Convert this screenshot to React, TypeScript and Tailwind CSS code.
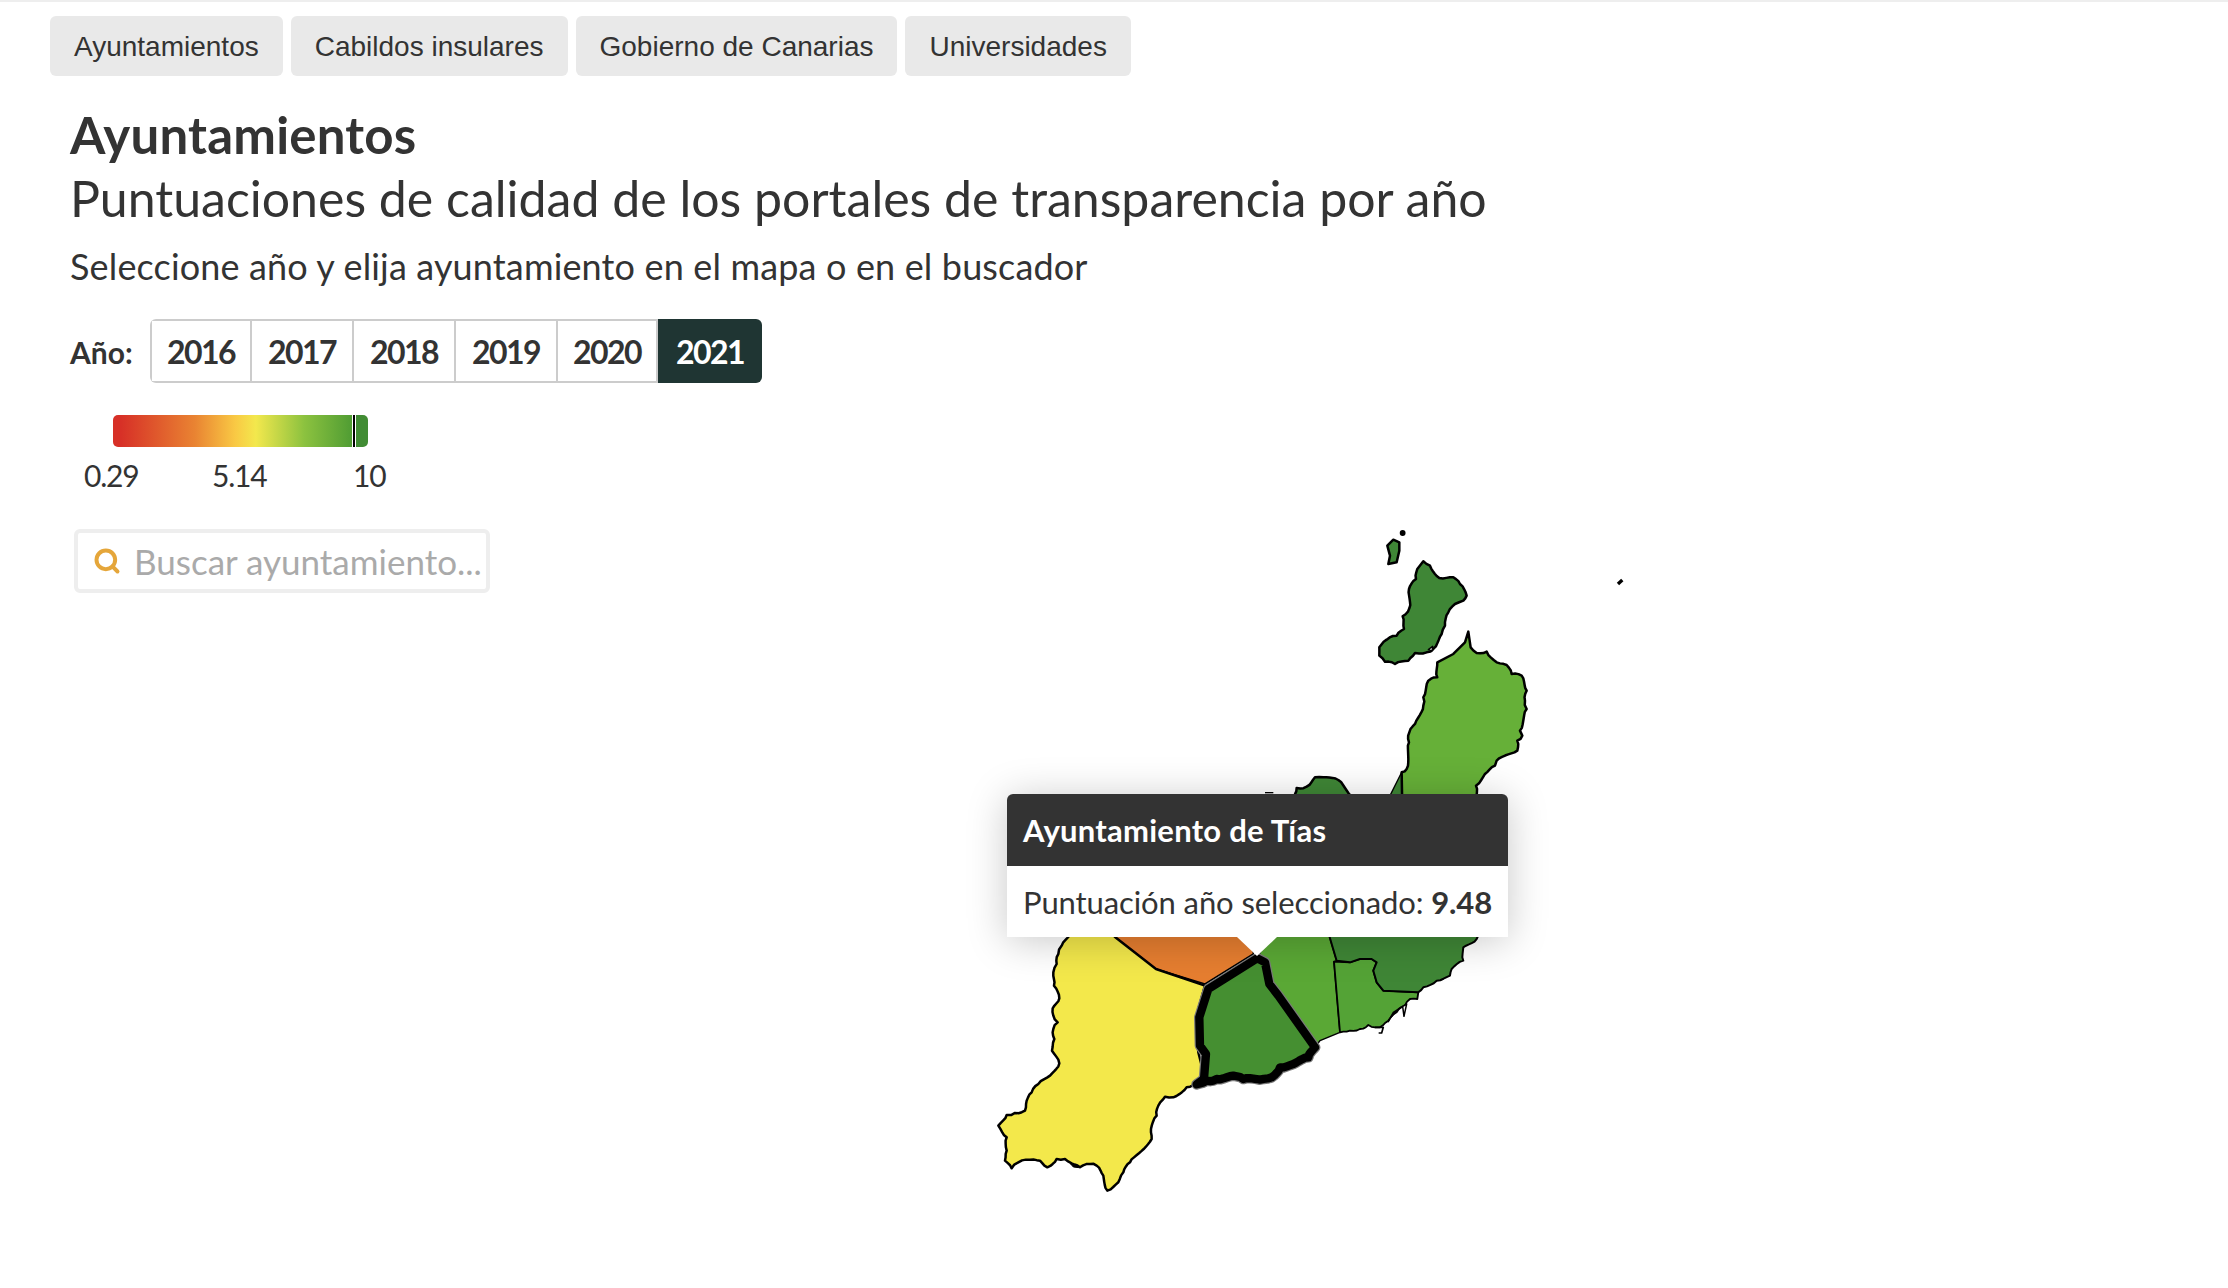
import { Search } from "lucide-react";

const sans = "font-['Lato','Noto_Sans',sans-serif]";

const tabs = ["Ayuntamientos", "Cabildos insulares", "Gobierno de Canarias", "Universidades"];
const years = [2016, 2017, 2018, 2019, 2020];

// "L" = tramo de costa (se le añade irregularidad), "T" = linde interior recto
function coast(d: string) {
  const parts = d.match(/[MLTZ]|-?\d+,-?\d+/g) ?? [];
  let out = "";
  let px = 0;
  let py = 0;
  let cmd = "M";
  let n = 0;
  for (const p of parts) {
    if (p === "Z") {
      out += "Z";
    } else if (p === "M" || p === "L" || p === "T") {
      cmd = p;
    } else {
      const [x, y] = p.split(",").map(Number);
      if (cmd === "L") {
        const len = Math.hypot(x - px, y - py);
        const steps = Math.floor(len / 9);
        for (let i = 1; i < steps; i++) {
          n++;
          const off = Math.sin(n * 12.9898) * 3.2;
          const t = i / steps;
          const ox = (-(y - py) / len) * off;
          const oy = ((x - px) / len) * off;
          out += `L${(px + (x - px) * t + ox).toFixed(1)},${(py + (y - py) * t + oy).toFixed(1)}`;
        }
      }
      out += `${cmd === "M" ? "M" : "L"}${x},${y}`;
      px = x;
      py = y;
    }
  }
  return out;
}

const yaiza = coast(
  "M235,-60 T235,24 L215,50 L205,75 L200,105 L190,130 L192,170 L208,208 L188,238 L190,260 L203,280 L190,300 L193,330 L186,365 L208,403 L180,440 L145,465 L125,490 L110,515 L105,545 L75,552 L50,558 L25,590 L50,625 L50,665 L45,695 L65,718 L85,700 L120,692 L150,695 L172,715 L200,690 L225,690 L245,703 L270,715 L300,705 L320,710 L340,740 L352,785 L385,760 L400,730 L420,700 L485,630 L483,600 L500,560 L505,530 L525,503 L550,505 L590,475 L620,465 T640,430 T625,370 T618,265 T645,170 T498,120 T375,24 T300,-60 Z"
);
const orange = "M300,-60 L375,24 L498,120 L645,165 L790,75 L790,-60 Z";

const tias = coast(
  "M232,88 T255,100 T268,165 T295,200 T405,355 L385,385 L340,405 L300,415 L275,445 L240,452 L190,450 L160,440 L110,450 L80,455 L50,466 T72,450 T78,375 T60,350 T58,265 T85,180 Z"
);
const tinajo = "M232,88 L290,-40 L430,-40 L470,95 L462,98 L480,310 L420,335 L405,355 L295,200 L268,165 L255,100 Z";
const arrecife = coast(
  "M462,98 T510,100 T540,90 T575,90 T590,100 T580,125 T590,160 T610,185 T715,190 T712,210 L690,210 L675,230 L650,250 L625,275 L600,295 L585,295 L565,288 L540,300 L510,305 L480,310 Z"
);
const teguiseSur = coast(
  "M430,-40 T470,95 T510,100 T540,90 T575,90 T590,100 T580,125 T590,160 T610,185 T715,190 L730,175 L770,155 L810,140 L815,120 L850,95 L850,55 L890,30 L900,-40 Z"
);

const graciosa = coast(
  "M430,157 L450,170 L478,207 L520,205 L540,225 L560,260 L550,275 L525,285 L505,310 L495,350 L485,375 L460,420 L440,430 L405,432 L385,455 L345,465 L315,458 L298,440 L298,415 L320,392 L350,380 L372,360 L368,322 L388,298 L387,240 L408,210 L412,180 Z"
);
const montana = "M340,92 L358,100 L358,125 L350,160 L325,165 L330,140 L322,110 Z";
const haria = coast(
  "M565,368 T572,415 L590,432 L620,428 L650,460 L680,468 L695,495 L725,500 L740,545 L735,575 L740,600 L720,665 L727,680 L712,695 L712,725 L650,755 L645,770 L615,795 L588,830 L588,900 T367,900 T365,790 L380,780 L387,700 L388,670 L405,645 L430,590 L430,565 L445,515 L472,505 L472,460 T520,435 T555,400 Z"
);
const wedge = "M365,790 L330,860 L367,860 Z";
const bump = coast("M160,100 L170,72 L200,68 L225,40 L250,40 L295,48 L340,100 Z");

// trazado de la isla, cada grupo en las coordenadas de su recorte
function MapaLanzarote() {
  return (
    <svg width="660" height="690" viewBox="980 520 660 690" className="block">
      <g transform="translate(1280 510) scale(0.3333)" stroke="#000" strokeWidth="7.5" strokeLinejoin="round">
        <path d={graciosa} fill="#3f8636" />
        <path d="M445,422 L458,412 L456,426 Z" fill="#fff" strokeWidth="4" />
        <path d={montana} fill="#3f8636" />
        <circle cx="368" cy="72" r="5" fill="#000" />
        <path d="M1014,225 L1027,213" strokeWidth="10" />
        <path d={wedge} fill="#3f8636" strokeWidth="4" />
        <path d={haria} fill="#66b038" />
      </g>
      <g transform="translate(1240 765) scale(0.3333)" stroke="#000" strokeWidth="7.5" strokeLinejoin="round">
        <path d={bump} fill="#3f8636" />
        <path d="M75,86 L100,86" strokeWidth="4" />
      </g>
      <g transform="translate(990 930) scale(0.3333)" stroke="#000" strokeLinejoin="round">
        <path d={orange} fill="#e67e30" strokeWidth="4.5" />
        <path d={yaiza} fill="#f3e84b" strokeWidth="7.5" />
        <path d="M242,705 L258,708 L266,716 L250,714 Z" fill="#000" strokeWidth="3" />
      </g>
      <g transform="translate(1180 930) scale(0.3333)" stroke="#000" strokeLinejoin="round">
        <path d={tinajo} fill="#5aa835" strokeWidth="4.5" />
        <path d={arrecife} fill="#54a336" strokeWidth="5.5" />
        <path d={teguiseSur} fill="#3f8636" strokeWidth="6" />
        <path d="M585,295 L610,295 L605,312 L596,312" fill="none" strokeWidth="5" />
        <path d="M625,278 L640,250 L668,232 L672,262 L680,225 L655,240 L630,268 Z" fill="#fff" strokeWidth="4.5" />
        <path d={tias} fill="#458f31" stroke="#7a7a7a" strokeWidth="32" />
        <path d={tias} fill="#458f31" strokeWidth="25" />
      </g>
    </svg>
  );
}

function Tooltip() {
  return (
    <div className={`absolute left-[27px] top-[275px] w-[501px] rounded-t-[6px] bg-white text-[#333] shadow-[0_4px_40px_rgba(0,0,0,0.22)] ${sans}`}>
      <div className="flex h-[72px] items-center rounded-t-[6px] bg-[#333] px-4 text-[31px] font-bold tracking-[0.25px] text-white">
        Ayuntamiento de Tías
      </div>
      <div className="flex h-[71px] items-center whitespace-nowrap px-4 pt-[2px] text-[31px] tracking-[-0.1px]">
        Puntuación año seleccionado:&nbsp;<b>9.48</b>
      </div>
      <div className="absolute left-[230px] top-[143px] h-0 w-0 border-x-[20px] border-t-[19px] border-x-transparent border-t-white" />
    </div>
  );
}

export default function App() {
  return (
    <div className="min-h-[1288px] w-[2228px] overflow-hidden border-t-2 border-[#eeeeee] bg-white text-[#333]">
      <div className="flex gap-2 pl-[50px] pt-[14px]">
        {tabs.map((t) => (
          <div
            key={t}
            className="flex h-[60px] items-center rounded-[6px] bg-[#e9e9e9] px-[24px] pt-[2px] font-['Liberation_Sans',sans-serif] text-[28px] text-[#333]"
          >
            {t}
          </div>
        ))}
      </div>

      <div className={`pl-[70px] ${sans}`}>
        <h1 className="mt-[27px] h-[64px] text-[51px] leading-[64px] font-bold tracking-[0.2px]">Ayuntamientos</h1>
        <h2 className="h-[62px] text-[50px] leading-[62px]">
          Puntuaciones de calidad de los portales de transparencia por año
        </h2>
        <p className="mt-[7px] h-[60px] text-[36px] leading-[60px] tracking-[0.15px]">
          Seleccione año y elija ayuntamiento en el mapa o en el buscador
        </p>

        <div className="mt-[23px] flex h-[64px] items-center">
          <span className="w-[80px] pt-[2px] text-[30px] font-bold">Año:</span>
          <div className="flex h-[64px] overflow-hidden rounded-[6px]">
            {years.map((y, i) => (
              <div
                key={y}
                className={`flex items-center justify-center border-y-2 border-r-2 border-[#cccccc] pt-[2px] text-[32px] font-bold tracking-[-1.5px] ${
                  i === 0 ? "border-l-2" : ""
                } ${i === 4 ? "w-[100px]" : "w-[102px]"}`}
              >
                {y}
              </div>
            ))}
            <div className="flex w-[104px] items-center justify-center bg-[#1f3533] pt-[2px] text-[32px] font-bold tracking-[-1.5px] text-white">
              2021
            </div>
          </div>
        </div>
      </div>

      <div className="relative ml-[113px] mt-[32px] h-[32px] w-[255px] overflow-hidden rounded-[5px] bg-[linear-gradient(to_right,#d73027_3%,#e98332_32%,#f9c944_48%,#f3e84d_56%,#8cc23f_75%,#4f9c33_94%,#418c34_94%)]">
        <div className="absolute bottom-0 left-[239px] top-0 w-[4px] border-x border-white bg-black" />
      </div>
      <div className={`ml-[84px] mt-[10px] flex h-[36px] items-center text-[30px] leading-[36px] tracking-[-1.2px] ${sans}`}>
        <span className="w-[128px]">0.29</span>
        <span className="w-[141px]">5.14</span>
        <span>10</span>
      </div>

      <div className="mt-[36px] flex items-start pl-[74px]">
        <div className={`flex h-[64px] w-[416px] shrink-0 items-center gap-[13px] rounded-[6px] border-4 border-[#eeeeee] pl-[15px] text-[35px] whitespace-nowrap text-[#aaaaaa] ${sans}`}>
          <Search size={28} strokeWidth={3.4} className="shrink-0 text-[#e5a63a]" />
          <span>Buscar ayuntamiento...</span>
        </div>
        <div className="relative ml-[490px] mt-[-10px]">
          <MapaLanzarote />
          <Tooltip />
        </div>
      </div>
    </div>
  );
}
